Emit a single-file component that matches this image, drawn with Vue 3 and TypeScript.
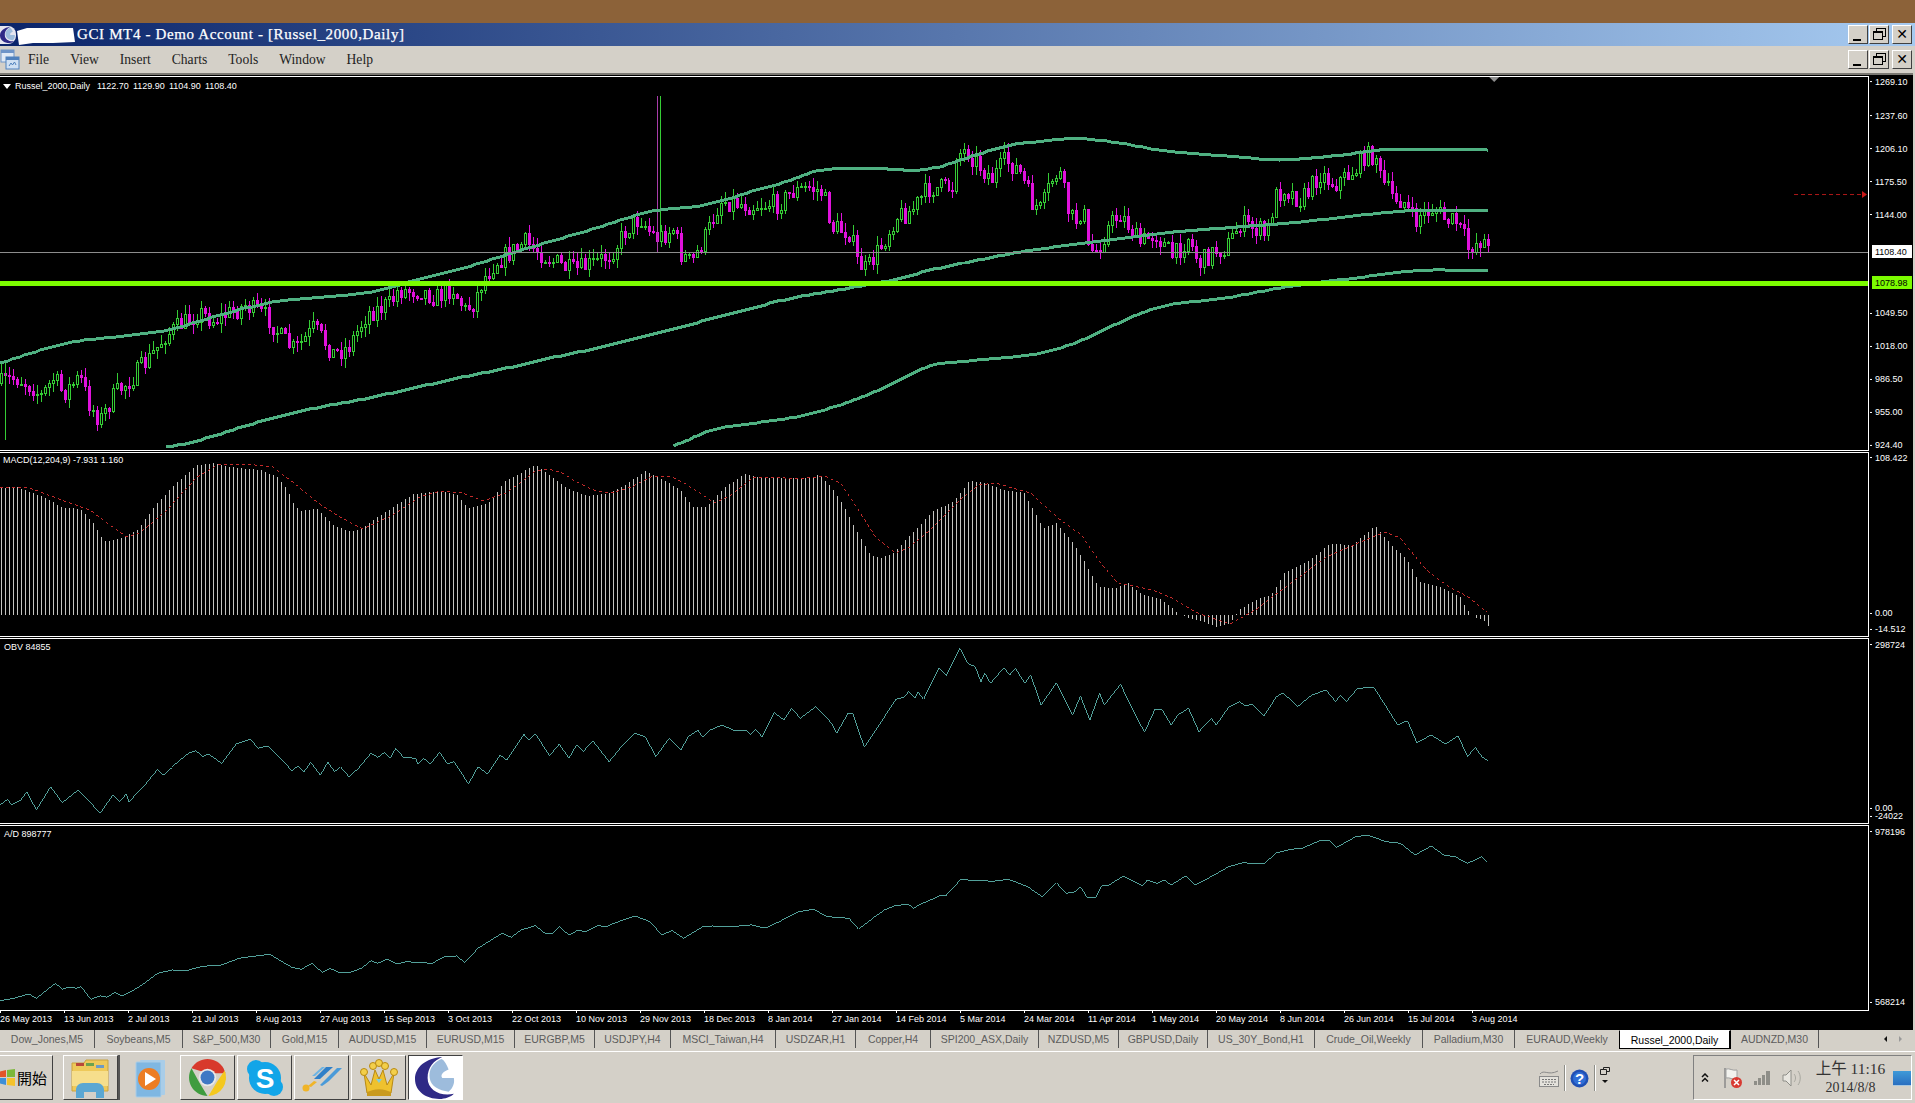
<template>
  <div class="desktop">
    <svg width="0" height="0" class="defs">
      <symbol id="moon" viewBox="0 0 40 40">
        <path d="M26 0C10 1 0 10 0 21c0 12 11 19 23 19 6 0 11-2 14-5-12 3-25-3-25-15C12 10 18 3 26 0Z" fill="#2f2a86" />
        <path d="M25 2C16 6 13 13 14 20c1 8 9 12 18 13 4-3 6-8 5-13H26c-2-2 0-6 6-8-2-5-4-9-7-10Z" fill="#9dbcdc" />
      </symbol>
    </svg>

    <div class="top-strip"></div>

    <div class="title-bar">
      <svg class="title-icon" width="16" height="18"><use href="#moon" /></svg>
      <svg class="title-blob" width="60" height="18" viewBox="0 0 60 18">
        <path d="M2 4 12 1l46 0 2 14-22 1-20 0-14 2Z" fill="#fff" />
      </svg>
      <span class="title-text">GCI MT4 - Demo Account - [Russel_2000,Daily]</span>
      <div class="win-buttons">
        <button class="win-btn"><i class="ic-min"></i></button>
        <button class="win-btn"><i class="ic-restore"></i></button>
        <button class="win-btn close"><i class="ic-close">✕</i></button>
      </div>
    </div>

    <div class="menu-bar">
      <svg class="doc-icon" width="20" height="21" viewBox="0 0 20 21">
        <rect x="1" y="1" width="13" height="12" fill="#dfe9f5" stroke="#6d94c8" />
        <rect x="1" y="1" width="13" height="3" fill="#6d94c8" />
        <rect x="6" y="8" width="13" height="12" fill="#cfe0f3" stroke="#4f81bd" />
        <rect x="6" y="8" width="13" height="3" fill="#4f81bd" />
        <path d="M9 17l2-3 1.500 2 2-3 1.500 3" fill="none" stroke="#4f81bd" />
      </svg>
      <span v-for="m in menus" :key="m" class="menu-item">{{ m }}</span>
      <div class="win-buttons">
        <button class="win-btn"><i class="ic-min"></i></button>
        <button class="win-btn"><i class="ic-restore"></i></button>
        <button class="win-btn close"><i class="ic-close">✕</i></button>
      </div>
    </div>

    <div class="chart-window">
      <!-- 主图 -->
      <div class="pane pane-main">
        <svg class="plot" width="1869" height="373" viewBox="0 77 1869 373">
          <g shape-rendering="crispEdges">
            <g v-for="c in candles" :key="c.x">
              <line :x1="c.x + 0.5" :x2="c.x + 0.5" :y1="c.hi" :y2="c.lo" :stroke="c.up ? GREEN : MAGENTA" />
              <rect v-if="c.up" :x="c.x - 0.5" :y="c.top + 0.5" width="2" :height="c.h" fill="#000" :stroke="GREEN" />
              <rect v-else :x="c.x - 1" :y="c.top" width="3" :height="c.h + 1" :fill="MAGENTA" />
            </g>
            <line x1="657.5" x2="657.5" y1="96" y2="252" stroke="#a83ca8" />
            <line x1="660.5" x2="660.5" y1="96" y2="237" :stroke="GREEN" />
            <line x1="5.500" x2="5.500" y1="363" y2="440" :stroke="GREEN" />
          </g>
          <polyline class="band" :points="bandUpper" />
          <polyline class="band" :points="bandMiddle" />
          <polyline class="band" :points="bandLower" />
          <rect x="0" y="252" width="1869" height="1" fill="#8e8e8e" />
          <rect x="0" y="281" width="1869" height="5" fill="#7cfc00" />
          <path d="M1490 77h10l-5 5Z" fill="#8e8e8e" />
          <line x1="1795" x2="1864" y1="194.500" y2="194.500" stroke="#b01818" stroke-dasharray="4 3" />
          <path d="M1863 191l5 3.500-5 3.500Z" fill="#c81818" />
          <path d="M3 84h8l-4 5Z" fill="#fff" />
          <text class="lbl" x="15" y="89">Russel_2000,Daily</text>
          <text v-for="q in quotes" :key="q.x" class="lbl" :x="q.x" y="89">{{ q.t }}</text>
        </svg>
        <svg class="axis" width="43" height="373" viewBox="1871 77 43 373">
          <g v-for="a in mainAxis" :key="a.t">
            <rect x="1871" :y="a.y" width="2" height="1" fill="#fff" />
            <text class="lbl" x="1876" :y="a.y + 3.500">{{ a.t }}</text>
          </g>
          <rect x="1873" y="246" width="40" height="13" fill="#fff" />
          <text class="lbl dark" x="1876" y="256">1108.40</text>
          <rect x="1873" y="277" width="40" height="13" fill="#7cfc00" />
          <text class="lbl dark" x="1876" y="287">1078.98</text>
        </svg>
      </div>

      <!-- MACD -->
      <div class="pane pane-sub">
        <svg class="plot" width="1869" height="183" viewBox="0 453 1869 183">
          <path :d="macdBars" stroke="#c4c4c0" fill="none" shape-rendering="crispEdges" />
          <polyline class="signal" :points="macdSignal" />
          <text class="lbl" x="3" y="463">MACD(12,204,9) -7.931 1.160</text>
        </svg>
        <svg class="axis" width="43" height="183" viewBox="1871 453 43 183">
          <g v-for="a in macdAxis" :key="a.t">
            <rect x="1871" :y="a.y" width="2" height="1" fill="#fff" />
            <text class="lbl" x="1876" :y="a.y + 3.500">{{ a.t }}</text>
          </g>
        </svg>
      </div>

      <!-- OBV -->
      <div class="pane pane-sub">
        <svg class="plot" width="1869" height="184" viewBox="0 639 1869 184">
          <polyline class="flow" :points="obvLine" />
          <text class="lbl" x="4" y="650">OBV 84855</text>
        </svg>
        <svg class="axis" width="43" height="184" viewBox="1871 639 43 184">
          <g v-for="a in obvAxis" :key="a.t">
            <rect x="1871" :y="a.y" width="2" height="1" fill="#fff" />
            <text class="lbl" x="1876" :y="a.y + 3.500">{{ a.t }}</text>
          </g>
        </svg>
      </div>

      <!-- A/D -->
      <div class="pane pane-sub">
        <svg class="plot" width="1869" height="184" viewBox="0 826 1869 184">
          <polyline class="flow" :points="adLine" />
          <text class="lbl" x="4" y="837">A/D 898777</text>
        </svg>
        <svg class="axis" width="43" height="184" viewBox="1871 826 43 184">
          <g v-for="a in adAxis" :key="a.t">
            <rect x="1871" :y="a.y" width="2" height="1" fill="#fff" />
            <text class="lbl" x="1876" :y="a.y + 3.500">{{ a.t }}</text>
          </g>
        </svg>
      </div>

      <svg class="date-axis" width="1913" height="18" viewBox="0 1011 1913 18">
        <g v-for="d in dates" :key="d.t">
          <rect :x="d.x" y="1011" width="1" height="2" fill="#fff" />
          <text class="lbl" :x="d.x" y="1021.500">{{ d.t }}</text>
        </g>
      </svg>
    </div>

    <div class="tab-bar">
      <span
        v-for="t in tabs"
        :key="t.name"
        class="tab"
        :class="{ active: t.active, plain: t.plain }"
        :style="{ width: t.w + 'px' }"
      >{{ t.name }}</span>
      <span class="tab-arrows">
        <i class="arrow left"></i>
        <i class="arrow right"></i>
      </span>
    </div>

    <div class="taskbar">
      <button class="task-btn start">
        <svg width="18" height="18" viewBox="0 0 18 18" class="start-flag">
          <path d="M0 3 8 1v7H0Z" fill="#e2552a" />
          <path d="M9 1l8-1v8H9Z" fill="#7bb83a" />
          <path d="M0 9h8v7l-8-2Z" fill="#3e8fd8" />
          <path d="M9 9h8v8l-8-1Z" fill="#f4c22c" />
        </svg>
        <span>開始</span>
      </button>

      <button class="task-btn folder-btn">
        <svg width="42" height="42" viewBox="0 0 42 42">
          <path d="M2 6h12l2-3h22v31H2Z" fill="#eec95a" stroke="#c9a23e" />
          <rect x="6" y="6" width="8" height="3" fill="#b9473a" />
          <rect x="16" y="6" width="8" height="3" fill="#6ca24e" />
          <rect x="26" y="8" width="8" height="3" fill="#6e9ac4" />
          <path d="M2 14h36v15H2Z" fill="#f6de8c" />
          <path d="M6 41V33c0-4 3-7 7-7h14c4 0 7 3 7 7v8h-8v-6H14v6Z" fill="#5ba7d3" />
        </svg>
      </button>

      <button class="task-btn flat media-btn">
        <svg width="34" height="40" viewBox="0 0 34 40">
          <rect x="7" y="2" width="25" height="35" rx="1" fill="#a9cde8" />
          <rect x="3" y="4" width="25" height="35" rx="1" fill="#7fb7e2" stroke="#a9cde8" />
          <circle cx="16" cy="21" r="11" fill="#ec7d24" />
          <path d="M12 14l11 7-11 7Z" fill="#fff" />
        </svg>
      </button>

      <button class="task-btn">
        <svg width="37" height="37" viewBox="-20 -20 40 40">
          <path d="M-17.300-10A20 20 0 0 1 17.300-10L19.500-4.500H0Z" fill="#d8392b" />
          <path d="M18.500-7.500A20 20 0 0 1 1 20L10 5Z" fill="#f4c81e" />
          <path d="M0 20A20 20 0 0 1-17.300-10L-9 5Z" fill="#3f9c3f" />
          <circle r="9.500" fill="#e8e8e8" />
          <circle r="7.500" fill="#3f78c4" />
        </svg>
      </button>

      <button class="task-btn">
        <svg width="38" height="38" viewBox="0 0 38 38">
          <circle cx="19" cy="19" r="16" fill="#12a5e8" />
          <circle cx="10" cy="10" r="9" fill="#12a5e8" />
          <circle cx="28" cy="28" r="9" fill="#12a5e8" />
          <text x="19" y="29" text-anchor="middle" class="skype-s">S</text>
        </svg>
      </button>

      <button class="task-btn">
        <svg width="40" height="28" viewBox="0 0 40 28">
          <path d="M12 15 24 3h7L18 15Z" fill="#2f7fc8" />
          <path d="M18 21 35 4h5L27 17l-4 3-3 2Z" fill="#4a9ad8" />
          <path d="M10 12 20 3h3L13 12Z" fill="#6cb4e4" />
          <circle cx="4" cy="24" r="3.500" fill="#f0b428" />
          <path d="M6 22l6-5 3 1-6 5Z" fill="#f0b428" />
        </svg>
      </button>

      <button class="task-btn">
        <svg width="40" height="38" viewBox="0 0 40 38">
          <path d="M5 14l7 12 4-15 4 9 4-9 4 15 7-12-3 20H8Z" fill="#eec12f" stroke="#b88a14" />
          <circle cx="5" cy="13" r="3.500" fill="#f3cf4a" stroke="#b88a14" />
          <circle cx="14" cy="7" r="3.500" fill="#f3cf4a" stroke="#b88a14" />
          <circle cx="20" cy="4" r="3.500" fill="#f3cf4a" stroke="#b88a14" />
          <circle cx="26" cy="7" r="3.500" fill="#f3cf4a" stroke="#b88a14" />
          <circle cx="35" cy="13" r="3.500" fill="#f3cf4a" stroke="#b88a14" />
          <path d="M17 20h6l-3 4Z" fill="#7fd0e0" />
          <path d="M8 34c5-5 19-5 24 0v3H8Z" fill="#c99a1e" />
        </svg>
      </button>

      <button class="task-btn active-btn">
        <svg width="42" height="42"><use href="#moon" /></svg>
      </button>

      <div class="notify-tools">
        <svg width="20" height="18" viewBox="0 0 20 18">
          <path d="M1 5c4-5 8 2 18-3" fill="none" stroke="#8a8a8a" />
          <rect x="0.500" y="7.500" width="19" height="10" fill="#e4e2dc" stroke="#8a8a8a" />
          <path d="M3 10.500h14M3 13h14M5 15.500h10" stroke="#777" stroke-dasharray="2 1" />
        </svg>
        <i class="tool-sep"></i>
        <svg width="19" height="19" viewBox="0 0 19 19">
          <circle cx="9.500" cy="9.500" r="9" fill="#1f4fb4" />
          <circle cx="9.500" cy="9.500" r="6.500" fill="#2f6ed6" />
          <text x="9.500" y="15" text-anchor="middle" class="help-q">?</text>
        </svg>
        <i class="tool-sep"></i>
        <div class="tool-mini">
          <svg width="10" height="8" viewBox="0 0 10 8">
            <path d="M3.500 2.500V.5h6v4h-3M.5 2.500h6v5h-6Z" fill="none" stroke="#222" />
          </svg>
          <i class="mini-arrow"></i>
        </div>
      </div>

      <div class="tray">
        <span class="tray-chevron">
          <svg width="8" height="10" viewBox="0 0 8 10">
            <path d="M1 4l3-3 3 3M1 8.500l3-3 3 3" fill="none" stroke="#111" stroke-width="1.500" />
          </svg>
        </span>
        <svg class="tray-flag" width="20" height="22" viewBox="0 0 20 22">
          <path d="M2 1v20" stroke="#8a8a8a" stroke-width="1.500" />
          <path d="M3 2c4-1 6 2 11 1v9c-5 1-7-2-11-1Z" fill="#f2f2ee" stroke="#a0a0a0" />
          <circle cx="13.500" cy="15.500" r="5.500" fill="#d83a32" />
          <path d="M11 13l5 5M16 13l-5 5" stroke="#fff" stroke-width="1.500" />
        </svg>
        <svg class="tray-signal" width="16" height="14" viewBox="0 0 16 14">
          <path d="M0 10h3v4H0ZM4 7h3v7H4ZM8 4h3v10H8ZM12 0h4v14h-4Z" fill="#8e8e88" />
        </svg>
        <svg class="tray-sound" width="21" height="20" viewBox="0 0 21 20">
          <path d="M1 7h3l5-5v16l-5-5H1Z" fill="#e8e6e0" stroke="#8e8e88" />
          <path d="M12 6c2 2 2 6 0 8M16 3c3 4 3 10 0 14" fill="none" stroke="#a8a8a0" />
        </svg>
        <div class="clock">
          <span class="clock-time">上午 11:16</span>
          <span class="clock-date">2014/8/8</span>
        </div>
        <i class="show-desktop"></i>
      </div>
    </div>
  </div>
</template>

<script setup lang="ts">
const GREEN = '#35cc35'
const MAGENTA = '#e012dc'

const menus = ['File', 'View', 'Insert', 'Charts', 'Tools', 'Window', 'Help']

// 关键点字符串 "x,y x,y" 转成数组
const parse = (s: string): number[][] =>
  s.trim().split(/\s+/).map((p) => p.split(',').map(Number))

const toPoints = (pts: number[][]) => pts.map((p) => p.join(',')).join(' ')

// 按 x 做线性插值
const interp = (pts: number[][], x: number): number => {
  if (x <= pts[0][0]) return pts[0][1]
  for (let i = 1; i < pts.length; i++) {
    if (x <= pts[i][0]) {
      const [x0, y0] = pts[i - 1]
      const [x1, y1] = pts[i]
      return y0 + ((y1 - y0) * (x - x0)) / (x1 - x0)
    }
  }
  return pts[pts.length - 1][1]
}

// 布林带是平滑曲线：按 K 线间距采样后做滑动平均
const smooth = (s: string): string => {
  const pts = parse(s)
  const start = pts[0][0]
  const end = pts[pts.length - 1][0]
  const out: number[][] = []
  for (let x = start; x <= end; x += 4) {
    let sum = 0
    for (let k = -4; k <= 4; k++) sum += interp(pts, Math.min(end, x + k * 4))
    out.push([x, Math.round(sum / 9)])
  }
  out.push([end, pts[pts.length - 1][1]])
  return toPoints(out)
}

const bandUpper = smooth(`0,365 8,360 38,351 57,345 84,340 111,338 142,334 168,331 203,320 233,311 276,301
  306,299 364,294 394,287 421,278 452,272 525,249 600,227 627,218 658,209 694,207 720,202 752,191 787,182 819,169
  863,167 890,169 912,170 935,169 970,157 1015,143 1046,141 1073,137 1091,139 1118,142 1158,150 1203,154 1247,157
  1270,160 1300,159 1359,153 1378,149 1480,149 1489,150`)

const bandMiddle = smooth(`166,448 195,442 249,425 276,417 325,406 356,401 406,390 459,378 509,368 536,361
  600,348 700,322 787,299 886,282 939,268 1024,251 1091,242 1180,231 1247,226 1300,222 1378,213 1410,210 1489,210`)

const bandLower = smooth(`674,448 708,430 794,418 830,409 879,391 928,365 1038,355 1075,344 1136,315 1166,305
  1223,299 1287,287 1325,282 1359,278 1410,271 1457,270 1467,272 1489,270`)

const pricePath = parse(`1,383 15,377 34,387 40,397 54,377 63,393 80,377 89,403 100,420 115,393 132,378 153,353 165,335
  199,312 214,320 245,305 268,317 281,337 295,350 314,327 333,353 348,347 367,313 390,303 398,290 421,290 436,297
  452,287 465,310 473,303 484,277 495,262 525,242 550,259 572,271 600,260 611,253 627,228 640,217 651,233 658,238
  674,228 680,253 691,263 707,233 720,200 752,205 779,203 792,192 810,187 823,193 832,227 850,232 857,260 866,270
  886,237 895,217 912,210 928,188 953,187 957,153 968,150 982,167 993,178 1006,160 1020,170 1033,203 1042,210
  1051,183 1060,170 1069,210 1075,223 1084,207 1089,250 1098,250 1109,227 1120,213 1131,227 1140,243 1156,233
  1174,257 1189,237 1200,263 1216,250 1227,247 1241,223 1261,230 1267,237 1276,197 1285,187 1300,200 1308,193
  1320,173 1335,183 1347,177 1357,168 1365,155 1378,155 1380,175 1392,195 1404,200 1416,223 1420,215 1435,208
  1445,218 1457,222 1465,237 1469,248 1476,243 1484,238 1489,250`)

// 固定种子，保证每次画出来一样
let seed = 7
const rnd = () => {
  seed = (seed * 16807) % 2147483647
  return seed / 2147483647
}

const BAR_COUNT = 373

const candles = (() => {
  const out = []
  let open = interp(pricePath, 1)
  for (let i = 0; i < BAR_COUNT; i++) {
    const x = 4 * i + 1
    const close = interp(pricePath, x) + (rnd() - 0.5) * 20
    const top = Math.round(Math.min(open, close))
    const bottom = Math.round(Math.max(open, close))
    out.push({
      x,
      top,
      h: Math.max(bottom - top, 1),
      up: close < open,
      hi: top - Math.round(rnd() * 10),
      lo: bottom + Math.round(rnd() * 10),
    })
    open = close
  }
  return out
})()

const macdEnvelope = parse(`0,488 17,487 33,493 50,500 60,507 80,509 93,523 103,541 110,541 123,537 137,530 157,503
  177,482 197,465 213,463 230,467 260,470 277,477 287,490 293,503 300,511 317,509 333,525 347,531 360,530 370,522
  393,507 413,494 440,491 457,495 467,508 480,505 490,502 504,482 535,465 554,479 570,490 587,496 609,493 628,483
  645,471 664,480 680,490 693,507 706,507 725,487 744,474 760,478 812,478 818,474 831,487 844,507 854,527 870,555
  880,558 893,553 915,530 934,510 954,502 970,481 986,483 1005,490 1025,493 1034,510 1044,528 1057,523 1073,542
  1086,563 1099,587 1118,588 1128,582 1140,593 1163,600 1173,608 1180,615 1198,620 1218,627 1231,623 1240,610
  1256,600 1272,595 1285,573 1311,560 1330,544 1353,545 1376,526 1392,545 1408,560 1420,582 1443,588 1462,598
  1465,605 1469,611 1473,615 1477,618 1481,619 1485,621 1489,626`)

const macdBars = (() => {
  let d = ''
  for (let i = 0; i < BAR_COUNT; i++) {
    const x = 4 * i + 1
    d += `M${x + 0.5} 615V${Math.round(interp(macdEnvelope, x))}`
  }
  return d
})()

const macdSignal = toPoints(parse(`0,487 27,487 43,493 67,502 90,510 107,523 127,537 140,533 167,510 197,477 217,465
  247,464 273,467 293,482 317,502 340,517 363,529 393,515 420,497 440,491 463,493 483,501 506,493 522,482 535,471
  548,469 561,472 577,482 596,491 612,493 632,487 651,477 670,476 683,482 703,495 715,503 731,495 754,477 773,477
  799,479 825,476 841,483 857,507 876,537 896,553 909,548 934,527 960,500 979,485 996,483 1031,493 1057,517 1082,535
  1099,560 1118,583 1153,590 1173,598 1198,613 1231,624 1256,610 1289,585 1327,557 1366,540 1385,532 1401,538
  1427,570 1450,587 1469,597 1488,612`))

// OBV / AD 从放大图读的坐标，x 缩放 0.9566，y = 640 + Y / 3
const zoomLine = (s: string) =>
  toPoints(parse(s).map(([x, y]) => [+(x * 0.9566).toFixed(1), +(640 + y / 3).toFixed(1)]))

const obvLine = zoomLine(`0,495 8,478 12,495 22,480 28,455 38,510 53,440 65,488 82,450 105,520 118,465 125,485 132,462
  135,485 150,440 165,388 170,405 180,380 197,340 205,332 212,350 218,342 232,370 247,312 262,298 270,325 280,318
  300,375 305,392 312,378 318,395 325,367 335,405 343,367 350,395 356,380 365,410 375,385 388,340 395,352 402,338
  408,355 414,325 422,352 435,355 437,372 443,355 450,372 460,337 468,372 475,365 490,432 500,380 510,402 523,345
  530,360 548,283 553,300 560,282 575,347 585,312 595,355 603,315 610,335 620,302 637,365 650,320 664,280 675,290
  686,350 700,295 712,330 720,290 730,270 735,292 743,270 755,255 767,270 780,270 785,285 790,268 797,290 810,218
  820,240 828,205 837,235 853,200 870,250 875,280 887,220 892,222 904,322 915,275 937,178 946,172 950,155 957,175
  960,155 966,178 982,83 990,105 1004,25 1012,70 1020,80 1026,125 1030,100 1036,130 1050,83 1056,105 1062,85 1072,130
  1078,105 1089,195 1105,128 1122,225 1130,168 1140,240 1150,160 1155,195 1172,133 1185,210 1197,277 1208,208 1215,208
  1225,255 1232,225 1243,205 1254,275 1267,235 1272,255 1285,202 1297,185 1302,198 1310,192 1322,228 1335,170 1342,158
  1357,200 1372,165 1387,150 1397,185 1402,165 1408,185 1420,145 1437,142 1462,255 1472,242 1482,308 1497,285 1512,312
  1525,287 1535,350 1543,322 1550,350 1556,362`)

const adLine = zoomLine(`0,1082 15,1075 30,1062 38,1075 58,1030 65,1048 72,1042 80,1045 85,1040 95,1078 105,1068 112,1072
  120,1058 128,1068 140,1050 150,1032 165,1000 180,990 195,992 210,980 220,977 232,975 250,955 262,950 282,943 305,982
  315,988 327,970 337,998 345,985 355,998 365,998 378,985 388,962 395,970 405,958 415,972 425,965 440,968 452,970
  465,950 478,948 486,968 500,925 525,880 535,892 545,870 560,857 570,880 578,880 585,860 595,885 605,870 612,875
  625,857 635,860 642,850 664,828 680,845 692,885 703,872 715,895 735,860 745,858 765,860 785,855 795,862 803,862
  815,845 825,830 835,815 851,808 865,830 875,832 888,835 898,868 915,830 925,810 935,798 950,792 955,805 965,790
  985,765 990,765 1005,718 1020,722 1030,720 1035,725 1055,718 1075,740 1090,770 1105,728 1115,760 1125,755 1130,740
  1137,772 1146,772 1152,738 1160,735 1175,708 1187,725 1195,738 1200,720 1210,730 1218,720 1225,735 1240,708 1250,735
  1270,705 1285,680 1300,668 1322,672 1335,638 1350,628 1362,625 1380,602 1390,600 1398,622 1418,590 1430,585 1450,605
  1465,610 1480,645 1497,618 1510,645 1522,650 1535,670 1550,650 1555,665`)

const quotes = [
  { x: 97, t: '1122.70' },
  { x: 133, t: '1129.90' },
  { x: 169, t: '1104.90' },
  { x: 205, t: '1108.40' },
]

const mainAxis = [
  { y: 82, t: '1269.10' },
  { y: 116, t: '1237.60' },
  { y: 149, t: '1206.10' },
  { y: 182, t: '1175.50' },
  { y: 215, t: '1144.00' },
  { y: 314, t: '1049.50' },
  { y: 347, t: '1018.00' },
  { y: 380, t: '986.50' },
  { y: 413, t: '955.00' },
  { y: 446, t: '924.40' },
]
const macdAxis = [
  { y: 458, t: '108.422' },
  { y: 614, t: '0.00' },
  { y: 630, t: '-14.512' },
]
const obvAxis = [
  { y: 645, t: '298724' },
  { y: 809, t: '0.00' },
  { y: 817, t: '-24022' },
]
const adAxis = [
  { y: 832, t: '978196' },
  { y: 1003, t: '568214' },
]

const dates = [
  '26 May 2013', '13 Jun 2013', '2 Jul 2013', '21 Jul 2013', '8 Aug 2013', '27 Aug 2013', '15 Sep 2013', '3 Oct 2013',
  '22 Oct 2013', '10 Nov 2013', '29 Nov 2013', '18 Dec 2013', '8 Jan 2014', '27 Jan 2014', '14 Feb 2014', '5 Mar 2014',
  '24 Mar 2014', '11 Apr 2014', '1 May 2014', '20 May 2014', '8 Jun 2014', '26 Jun 2014', '15 Jul 2014', '3 Aug 2014',
].map((t, i) => ({ t, x: i * 64 }))

const tabs = [
  { name: 'Dow_Jones,M5', w: 95 },
  { name: 'Soybeans,M5', w: 88 },
  { name: 'S&P_500,M30', w: 88 },
  { name: 'Gold,M15', w: 68 },
  { name: 'AUDUSD,M15', w: 88 },
  { name: 'EURUSD,M15', w: 88 },
  { name: 'EURGBP,M5', w: 80 },
  { name: 'USDJPY,H4', w: 76 },
  { name: 'MSCI_Taiwan,H4', w: 105 },
  { name: 'USDZAR,H1', w: 80 },
  { name: 'Copper,H4', w: 75 },
  { name: 'SPI200_ASX,Daily', w: 108 },
  { name: 'NZDUSD,M5', w: 80 },
  { name: 'GBPUSD,Daily', w: 89 },
  { name: 'US_30Y_Bond,H1', w: 107 },
  { name: 'Crude_Oil,Weekly', w: 108 },
  { name: 'Palladium,M30', w: 92 },
  { name: 'EURAUD,Weekly', w: 104, plain: true },
  { name: 'Russel_2000,Daily', w: 112, active: true },
  { name: 'AUDNZD,M30', w: 88 },
]
</script>

<style>
html,
body {
  margin: 0;
  background: #d4d0c8;
  overflow: hidden;
}
</style>

<style scoped>
.desktop {
  width: 1915px;
  height: 1103px;
  display: flex;
  flex-direction: column;
  background: #d4d0c8;
  font-family: 'Liberation Sans', Arial, sans-serif;
  overflow: hidden;
}

.defs {
  position: absolute;
}

.top-strip {
  height: 23px;
  background: #8c6239;
}

/* 标题栏 */
.title-bar {
  height: 23px;
  display: flex;
  align-items: center;
  background: linear-gradient(90deg, #0a246a 0%, #a6caf0 100%);
}

.title-icon {
  flex-shrink: 0;
  background: #e6e6f0;
  border-radius: 0 8px 8px 0;
}

.title-blob {
  flex-shrink: 0;
  margin-left: -1px;
  margin-top: 3px;
}

.title-text {
  margin-left: 2px;
  color: #fff;
  font-family: 'Liberation Serif', 'Times New Roman', serif;
  font-size: 15px;
  letter-spacing: 0.64px;
  -webkit-text-stroke: 0.25px #fff;
  white-space: nowrap;
}

.win-buttons {
  margin-left: auto;
  margin-right: 3px;
  display: flex;
  gap: 1px;
}

.win-btn {
  width: 20px;
  height: 19px;
  padding: 0;
  position: relative;
  background: #d4d0c8;
  border: 1px solid;
  border-color: #fff #404040 #404040 #fff;
  box-sizing: border-box;
}

.win-btn.close {
  margin-left: 2px;
}

.ic-min {
  position: absolute;
  left: 4px;
  bottom: 2px;
  width: 8px;
  height: 2px;
  background: #000;
}

.ic-restore {
  position: absolute;
  left: 3px;
  top: 5px;
  width: 8px;
  height: 6px;
  border: 1px solid #000;
  border-top-width: 2px;
  background: #d4d0c8;
  box-shadow: 3px -3px 0 -1px #d4d0c8, 3px -3px 0 0 #000;
}

.ic-close {
  position: absolute;
  inset: 0;
  line-height: 17px;
  text-align: center;
  font-style: normal;
  font-weight: 700;
  font-size: 14px;
  font-family: 'DejaVu Sans', sans-serif;
  color: #000;
}

/* 菜单栏 */
.menu-bar {
  height: 27px;
  display: flex;
  align-items: center;
  gap: 21px;
  background: #d4d0c8;
  font-family: 'Liberation Serif', 'Times New Roman', serif;
  font-size: 13.600px;
  color: #222;
}

.doc-icon {
  flex-shrink: 0;
  margin-right: -13px;
}

.chart-window {
  height: 957px;
  width: 1913px;
  padding-top: 3px;
  box-sizing: border-box;
  display: flex;
  flex-direction: column;
  gap: 1px;
  background: #000;
  box-shadow: inset 0 2px 0 #7a7872;
}

.pane {
  display: flex;
}

.plot {
  display: block;
  box-sizing: content-box;
  border: 1px solid #fff;
  border-left: 0;
}

.axis {
  display: block;
  margin-left: 1px;
}

.band {
  fill: none;
  stroke: #4fb081;
  stroke-width: 3;
  stroke-linejoin: round;
  shape-rendering: crispEdges;
}

.signal {
  fill: none;
  stroke: #c42a2a;
  stroke-dasharray: 3 3;
  shape-rendering: crispEdges;
}

.flow {
  fill: none;
  stroke: #52a09a;
  stroke-width: 1;
  shape-rendering: crispEdges;
}

.lbl {
  fill: #fff;
  font-family: 'Liberation Sans', Arial, sans-serif;
  font-size: 9px;
}

.lbl.dark {
  fill: #000;
}

.date-axis {
  display: block;
  margin-top: -1px;
}

/* 底部标签页 */
.tab-bar {
  height: 21px;
  flex-shrink: 0;
  display: flex;
  align-items: flex-start;
  border-bottom: 1px solid #fff;
  font-size: 10.500px;
  color: #5c5c5c;
}

.tab {
  height: 18px;
  line-height: 18px;
  text-align: center;
  box-sizing: border-box;
  border-right: 1px solid #555;
  white-space: nowrap;
}

.tab.plain {
  border-right: 0;
}

.tab.active {
  height: 19px;
  line-height: 18px;
  color: #000;
  background: #fff;
  border: 1px solid #000;
  border-top-color: #fff;
  border-right-width: 2px;
}

.tab-arrows {
  margin-left: 65px;
  display: flex;
  gap: 12px;
  align-items: center;
  height: 18px;
}

.arrow {
  width: 0;
  height: 0;
  border: 3px solid transparent;
}

.arrow.left {
  border-right-color: #111;
  border-left-width: 0;
}

.arrow.right {
  border-left-color: #999;
  border-right-width: 0;
}

/* 任务栏 */
.taskbar {
  flex: 1;
  display: flex;
  align-items: flex-start;
  gap: 2px;
  padding: 3px 3px 0 0;
}

.task-btn {
  width: 55px;
  height: 45px;
  padding: 0;
  display: flex;
  align-items: center;
  justify-content: center;
  background: #d4d0c8;
  box-sizing: border-box;
  border: 1px solid;
  border-color: #fff #404040 #404040 #fff;
}

.task-btn.start {
  width: 53px;
  margin-right: 8px;
  justify-content: flex-start;
  font-family: 'Noto Sans CJK TC', sans-serif;
  font-size: 15px;
  color: #000;
  border-left: 0;
}

.start-flag {
  flex-shrink: 0;
  margin-left: -2px;
  margin-right: 1px;
}

.folder-btn {
  box-shadow: 2px 0 0 #555;
  margin-right: 2px;
}

.task-btn.flat {
  width: 56px;
  border-color: transparent;
}

.active-btn {
  background: #fff;
  border-color: #404040 #fff #fff #404040;
}

.skype-s {
  fill: #fff;
  font-family: 'Liberation Sans', Arial, sans-serif;
  font-weight: 700;
  font-size: 28px;
}

.help-q {
  fill: #fff;
  font-family: 'Liberation Sans', Arial, sans-serif;
  font-weight: 700;
  font-size: 15px;
}

.notify-tools {
  margin-left: auto;
  margin-right: 81px;
  margin-top: 10px;
  display: flex;
  align-items: center;
  gap: 5px;
}

.tool-sep {
  width: 1px;
  height: 26px;
  background: #8e8e88;
  box-shadow: 1px 0 0 #fff;
}

.tool-mini {
  display: flex;
  flex-direction: column;
  align-items: center;
  gap: 5px;
  margin-bottom: 6px;
}

.mini-arrow {
  width: 0;
  height: 0;
  border: 3px solid transparent;
  border-top-color: #111;
  border-bottom-width: 0;
}

.tray {
  width: 219px;
  height: 45px;
  box-sizing: border-box;
  display: flex;
  align-items: center;
  border: 1px solid;
  border-color: #808080 #fff #fff #808080;
  padding-left: 7px;
}

.tray-flag {
  margin-left: 14px;
}

.tray-signal {
  margin-left: 11px;
}

.tray-sound {
  margin-left: 12px;
}

.clock {
  margin-left: 15px;
  width: 65px;
  display: flex;
  flex-direction: column;
  align-items: center;
  font-family: 'Liberation Serif', 'Noto Sans CJK TC', serif;
  color: #333;
  line-height: 19px;
}

.clock-time {
  font-size: 15.500px;
  white-space: nowrap;
}

.clock-date {
  font-size: 14px;
}

.show-desktop {
  width: 18px;
  height: 14px;
  margin-left: 10px;
  background: linear-gradient(180deg, #3f9ad8, #2a6fc0);
  box-shadow: 0 1px 0 #a8c8e0;
}
</style>
